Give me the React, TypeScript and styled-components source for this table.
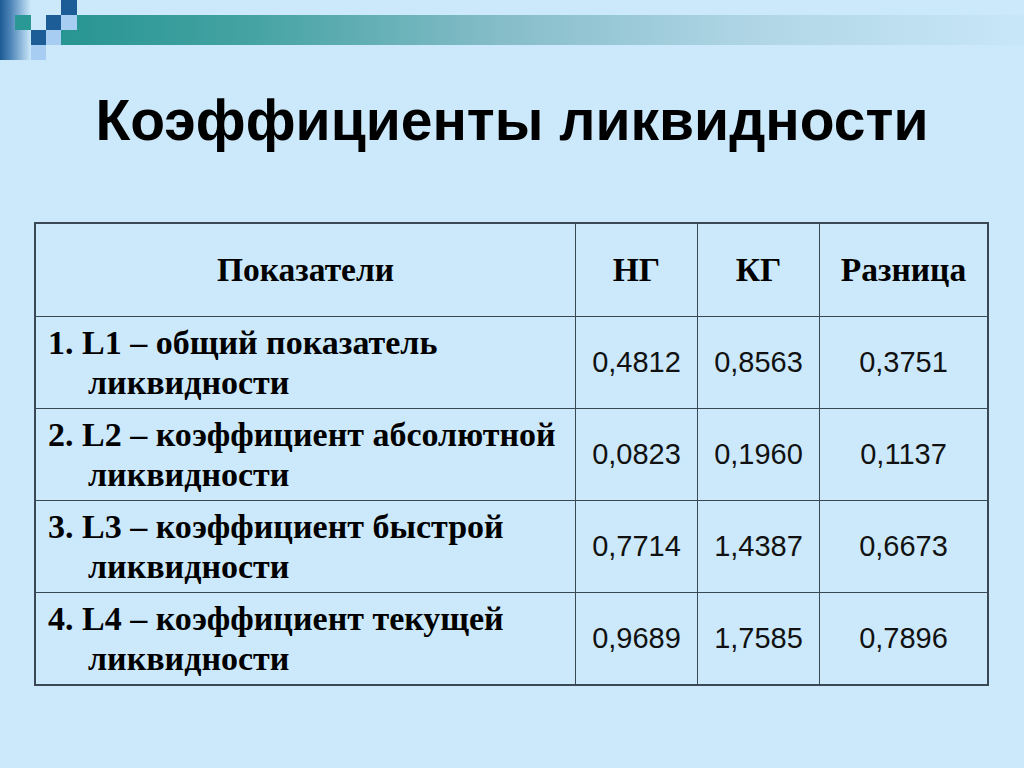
import styled, { createGlobalStyle } from 'styled-components'

const GlobalStyle = createGlobalStyle`
  html, body {
    margin: 0;
    padding: 0;
    background: #cce9fb;
  }
`

const Slide = styled.div`
  width: 1024px;
  height: 768px;
  display: flex;
  flex-direction: column;
  align-items: center;
  background: #cce9fb;
  overflow: hidden;
`

const Decoration = styled.svg`
  display: block;
  width: 1024px;
  height: 62px;
  flex-shrink: 0;
`

const Title = styled.h1`
  margin: 26px 0 0;
  font-family: 'Liberation Sans', Arial, sans-serif;
  font-weight: bold;
  font-size: 57px;
  line-height: 64px;
  color: #000;
  text-align: center;
`

const Table = styled.table`
  margin: 70px 0 0 -1px;
  border-collapse: collapse;
  border: 2px solid #3a4856;
  table-layout: fixed;
  width: 948px;
`

const HeadCell = styled.th<{ $w: number }>`
  width: ${(p) => p.$w}px;
  height: 92px;
  padding: 0;
  border: 1.5px solid #3a4856;
  font-family: 'Liberation Serif', 'Times New Roman', serif;
  font-weight: bold;
  font-size: 33.5px;
  color: #000;
  text-align: center;
  vertical-align: middle;
`

const LabelCell = styled.td`
  height: 91px;
  padding: 0 6px 0 12px;
  border: 1.5px solid #3a4856;
  font-family: 'Liberation Serif', 'Times New Roman', serif;
  font-weight: bold;
  font-size: 34px;
  line-height: 40px;
  color: #000;
  vertical-align: middle;
`

const LabelLine = styled.span<{ $indent?: boolean }>`
  display: block;
  padding-left: ${(p) => (p.$indent ? 40 : 0)}px;
  white-space: nowrap;
`

const NumCell = styled.td`
  padding: 0;
  border: 1.5px solid #3a4856;
  font-family: 'Liberation Sans', Arial, sans-serif;
  font-size: 29px;
  color: #111;
  text-align: center;
  vertical-align: middle;
`

const rows = [
  { head: '1. L1 – общий показатель', tail: 'ликвидности', ng: '0,4812', kg: '0,8563', diff: '0,3751' },
  { head: '2. L2 – коэффициент абсолютной', tail: 'ликвидности', ng: '0,0823', kg: '0,1960', diff: '0,1137' },
  { head: '3. L3 – коэффициент быстрой', tail: 'ликвидности', ng: '0,7714', kg: '1,4387', diff: '0,6673' },
  { head: '4. L4 – коэффициент текущей', tail: 'ликвидности', ng: '0,9689', kg: '1,7585', diff: '0,7896' },
]

function CornerDecoration() {
  return (
    <Decoration viewBox="0 0 1024 62">
      <defs>
        <linearGradient id="side" x1="0" x2="1" y1="0" y2="0">
          <stop offset="0" stopColor="#1b5a94" />
          <stop offset="0.35" stopColor="#4f86b8" />
          <stop offset="1" stopColor="#cce9fb" />
        </linearGradient>
        <linearGradient id="band" x1="0" x2="1" y1="0" y2="0">
          <stop offset="0" stopColor="#279592" />
          <stop offset="0.2" stopColor="#45a3a3" />
          <stop offset="0.46" stopColor="#86bdc9" />
          <stop offset="0.72" stopColor="#b0d6e6" />
          <stop offset="1" stopColor="#c8e7f8" />
        </linearGradient>
      </defs>
      <rect x="0" y="0" width="31" height="60" fill="url(#side)" />
      <rect x="61" y="15" width="963" height="30" fill="url(#band)" />
      <rect x="61" y="0" width="16" height="15" fill="#1c5d98" />
      <rect x="15" y="15" width="16" height="15" fill="#2a9894" />
      <rect x="46" y="15" width="15" height="15" fill="#1c5d98" />
      <rect x="61" y="15" width="16" height="15" fill="#a7cdf3" />
      <rect x="31" y="30" width="15" height="15" fill="#1c5d98" />
      <rect x="46" y="30" width="15" height="15" fill="#a7cdf3" />
      <rect x="31" y="45" width="15" height="15" fill="#a7cdf3" />
    </Decoration>
  )
}

export default function App() {
  return (
    <>
      <GlobalStyle />
      <Slide>
        <CornerDecoration />
        <Title>Коэффициенты ликвидности</Title>
        <Table>
          <thead>
            <tr>
              <HeadCell $w={539}>Показатели</HeadCell>
              <HeadCell $w={121}>НГ</HeadCell>
              <HeadCell $w={121}>КГ</HeadCell>
              <HeadCell $w={167}>Разница</HeadCell>
            </tr>
          </thead>
          <tbody>
            {rows.map((row) => (
              <tr key={row.head}>
                <LabelCell>
                  <LabelLine>{row.head}</LabelLine>
                  <LabelLine $indent>{row.tail}</LabelLine>
                </LabelCell>
                <NumCell>{row.ng}</NumCell>
                <NumCell>{row.kg}</NumCell>
                <NumCell>{row.diff}</NumCell>
              </tr>
            ))}
          </tbody>
        </Table>
      </Slide>
    </>
  )
}
